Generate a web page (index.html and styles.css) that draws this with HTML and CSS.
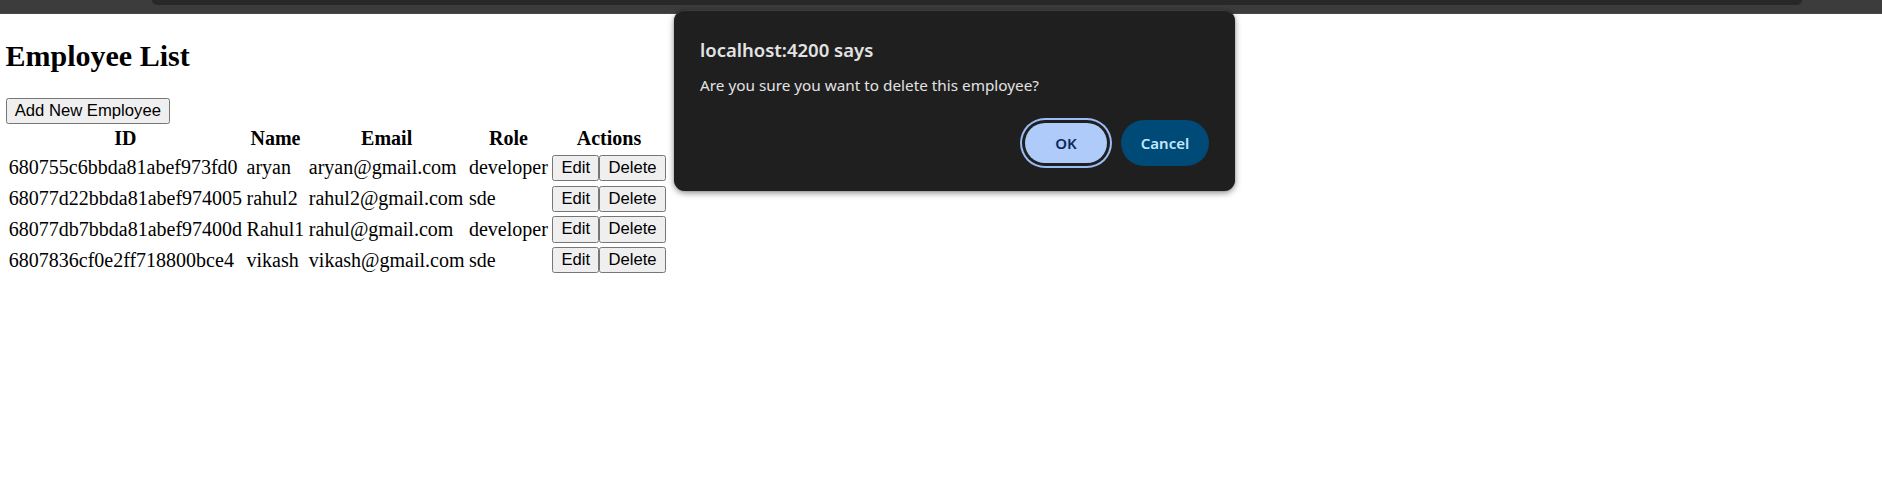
FILE: index.html
```html
<!DOCTYPE html>
<html>
<head>
<meta charset="utf-8">
<title>Employee List</title>
<link rel="stylesheet" href="styles.css">
</head>
<body>
<div class="chrome"><div class="chrome-bar"></div></div>
<main class="page">
  <h2 class="title">Employee List</h2>
  <button class="btn">Add New Employee</button>
  <table class="emp-table">
    <thead>
      <tr><th>ID</th><th>Name</th><th>Email</th><th>Role</th><th>Actions</th></tr>
    </thead>
    <tbody>
      <tr><td>680755c6bbda81abef973fd0</td><td>aryan</td><td>aryan@gmail.com</td><td>developer</td><td><button class="btn">Edit</button><button class="btn">Delete</button></td></tr>
      <tr><td>68077d22bbda81abef974005</td><td>rahul2</td><td>rahul2@gmail.com</td><td>sde</td><td><button class="btn">Edit</button><button class="btn">Delete</button></td></tr>
      <tr><td>68077db7bbda81abef97400d</td><td>Rahul1</td><td>rahul@gmail.com</td><td>developer</td><td><button class="btn">Edit</button><button class="btn">Delete</button></td></tr>
      <tr><td>6807836cf0e2ff718800bce4</td><td>vikash</td><td>vikash@gmail.com</td><td>sde</td><td><button class="btn">Edit</button><button class="btn">Delete</button></td></tr>
    </tbody>
  </table>
</main>

<div class="dialog">
  <div class="dialog-title">localhost:4200 says</div>
  <div class="dialog-msg">Are you sure you want to delete this employee?</div>
  <div class="dialog-actions">
    <button class="dlg-btn dlg-ok">OK</button>
    <button class="dlg-btn dlg-cancel">Cancel</button>
  </div>
</div>
</body>
</html>
```

FILE: styles.css
```css
html, body {
  margin: 0;
  padding: 0;
  background: #ffffff;
}

.chrome {
  height: 14px;
  background: #3c3c3c;
  border-bottom: 1px solid #474747;
  box-sizing: border-box;
}

.chrome-bar {
  margin: 0 80px 0 152px;
  height: 5px;
  background: #282828;
  border-radius: 0 0 10px 10px;
}

.page {
  zoom: 1.25;
  padding: 0 4.4px;
  font-family: "Liberation Serif", "Times New Roman", serif;
  font-size: 16px;
  color: #000;
  overflow: hidden;
}

.title {
  font-size: 24px;
  font-weight: bold;
  margin: 19.92px 0;
}

.btn {
  font-family: "Liberation Sans", Arial, sans-serif;
  font-size: 13.333px;
  color: #000;
  background: #efefef;
  border: 1px solid #767676;
  border-radius: 2px;
  padding: 1.7px 6.5px;
  margin: 0;
  line-height: normal;
}

.emp-table {
  border-spacing: 2px;
}

.emp-table th,
.emp-table td {
  padding: 1px;
}

.dialog {
  position: absolute;
  left: 674px;
  top: 10px;
  width: 561px;
  height: 181px;
  box-sizing: border-box;
  background: #1f1f1f;
  border-radius: 11px;
  border-top: 1px solid #3d3d35;
  box-shadow: 0 2px 6px rgba(0, 0, 0, 0.45), 0 0 1px rgba(0, 0, 0, 0.5);
  padding: 26px 26px 0 26px;
  font-family: "Noto Sans", "Open Sans", sans-serif;
  display: flex;
  flex-direction: column;
}

.dialog-title {
  color: #e3e3e3;
  font-size: 18.5px;
  font-weight: 600;
  line-height: 26px;
}

.dialog-msg {
  color: #e3e3e3;
  font-size: 15.3px;
  line-height: 20px;
  margin-top: 12px;
}

.dialog-actions {
  display: flex;
  justify-content: flex-end;
  gap: 14px;
  margin-top: 24.5px;
}

.dlg-btn {
  font-family: "Noto Sans", "Open Sans", sans-serif;
  font-size: 15px;
  font-weight: 600;
  height: 46px;
  border: none;
  border-radius: 23px;
  padding: 0;
  margin: 0;
}

.dlg-ok {
  width: 82px;
  background: #aecbfa;
  color: #0a2a5c;
  box-shadow: 0 0 0 3px #1f1f1f, 0 0 0 5px #9bbcf5;
  height: 40px;
  border-radius: 20px;
  align-self: center;
}

.dlg-cancel {
  width: 88px;
  background: #004a77;
  color: #c2e7ff;
}
```
